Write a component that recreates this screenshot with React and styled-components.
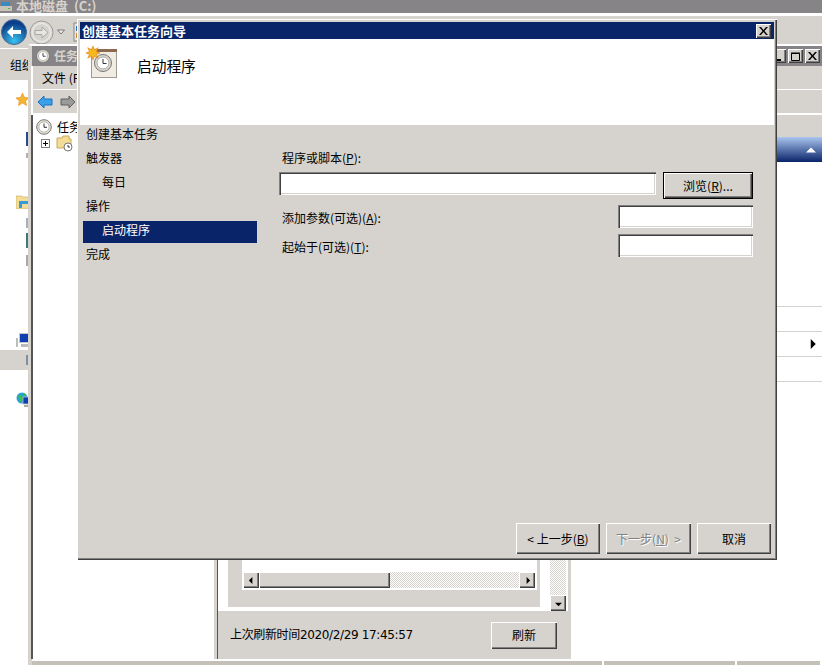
import React from "react";
import styled, { createGlobalStyle, css } from "styled-components";

const Global = createGlobalStyle`
  html, body { margin: 0; padding: 0; background: #fff; }
  * { box-sizing: border-box; }
`;

const FACE = "#d6d3ce";
const NAVY = "#0a246a";
const raised = css`
  box-shadow: inset 1px 1px 0 #fff, inset -1px -1px 0 #404040, inset -2px -2px 0 #808080;
`;
const dither = css`
  background: repeating-conic-gradient(${FACE} 0 25%, #fff 0 50%) 0 0 / 2px 2px;
`;

const Desktop = styled.div`
  position: relative;
  width: 822px;
  height: 665px;
  overflow: hidden;
  background: #fff;
  color: #000;
  font: 12px/18px "Noto Sans CJK SC", "Liberation Sans", sans-serif;
`;

/* ---------- Explorer window behind everything ---------- */
const Explorer = styled.div`
  position: absolute;
  inset: 0;
  display: flex;
  flex-direction: column;
`;
const ExplorerTitle = styled.div`
  height: 13px;
  flex: none;
  background: #868486;
  color: #d6d3ce;
  font-weight: 700;
  font-size: 13px;
  line-height: 11px;
  display: flex;
  gap: 4px;
  overflow: hidden;
  white-space: pre;
`;
const NavBar = styled.div`
  height: 33px;
  margin-top: 3px;
  flex: none;
  background: ${FACE};
  border-bottom: 1px solid #fff;
  display: flex;
  align-items: center;
  padding-left: 1px;
  gap: 2px;
`;
const OrganizeBar = styled.div`
  height: 31px;
  flex: none;
  background: ${FACE};
  display: flex;
  align-items: center;
  padding-left: 10px;
  white-space: nowrap;
  overflow: hidden;
`;
const NavPane = styled.div`
  width: 28px;
  flex: 1;
  display: flex;
  flex-direction: column;
  overflow: hidden;
`;
const NavItem = styled.div`
  margin-top: ${(p) => p.$top}px;
  height: ${(p) => p.$h}px;
  flex: none;
  display: flex;
  align-items: center;
  padding-left: 16px;
  ${(p) =>
    p.$selected &&
    css`
      background: ${FACE};
    `}
`;
const Sliver = styled.div`
  width: 2px;
  height: ${(p) => p.$h}px;
  margin-left: auto;
  background: ${(p) => p.$color};
`;

/* ---------- Task scheduler window ---------- */
const TaskWindow = styled.div`
  position: absolute;
  left: 28px;
  top: 44px;
  right: 0;
  height: 621px;
  display: flex;
  flex-direction: column;
  background: ${FACE};
  border-top: 2px solid #fff;
  border-left: 3px solid ${FACE};
  overflow: hidden;
`;
const TaskTitle = styled.div`
  height: 20px;
  flex: none;
  background: #868486;
  color: ${FACE};
  font-weight: 700;
  display: flex;
  align-items: center;
  padding-left: 4px;
  gap: 4px;
  border-left: 1px solid ${FACE};
`;
const WindowButtons = styled.div`
  margin-left: auto;
  display: flex;
  gap: 2px;
  padding-right: 2px;
`;
const WindowButton = styled.div`
  width: 15px;
  height: 14px;
  background: ${FACE};
  display: flex;
  align-items: center;
  justify-content: center;
  ${raised}
`;
const MenuBar = styled.div`
  height: 24px;
  flex: none;
  display: flex;
  align-items: center;
  padding-left: 9px;
  border-bottom: 1px solid #fff;
  border-left: 2px solid #fff;
  white-space: pre;
`;
const IconBar = styled.div`
  height: 25px;
  flex: none;
  display: flex;
  align-items: center;
  padding: 1px 0 0 4px;
  gap: 7px;
  border-bottom: 2px solid #fff;
  border-left: 2px solid #fff;
`;
const TaskBody = styled.div`
  flex: 1;
  min-height: 0;
  display: flex;
`;
const Tree = styled.div`
  width: 183px;
  flex: none;
  background: #fff;
  border-left: 2px solid #555;
  padding: 3px 0 0 3px;
  margin-right: 3px;
`;
const TreeRow = styled.div`
  display: flex;
  align-items: center;
  height: ${(p) => p.$h}px;
  gap: ${(p) => p.$gap}px;
  padding-left: ${(p) => p.$indent}px;
`;
const PlusBox = styled.div`
  width: 9px;
  height: 9px;
  border: 1px solid #808080;
  background:
    linear-gradient(#000, #000) center / 5px 1px no-repeat,
    linear-gradient(#000, #000) center / 1px 5px no-repeat;
`;
const CenterPane = styled.div`
  width: 354px;
  flex: none;
  display: flex;
  flex-direction: column;
  border-left: 1px solid #555;
  border-right: 3px solid ${FACE};
  box-shadow: 1px 0 0 #808080;
`;
const CenterScroll = styled.div`
  flex: 1;
  min-height: 0;
  display: flex;
  background: #fff;
  padding-right: 2px;
  justify-content: space-between;
`;
const CenterCard = styled.div`
  width: 312px;
  margin: 0 0 4px 10px;
  background: ${FACE};
  display: flex;
  flex-direction: column;
  justify-content: flex-end;
  padding: 0 3px 17px 14px;
`;
const ListBox = styled.div`
  background: #fff;
  border-bottom: 2px solid #fff;
  padding: 0 2px 0 1px;
  height: 100px;
  display: flex;
  flex-direction: column;
  justify-content: flex-end;
`;
const HScroll = styled.div`
  height: 16px;
  display: flex;
  ${dither}
`;
const ScrollButton = styled.div`
  width: 16px;
  height: 16px;
  flex: none;
  background: ${FACE};
  display: flex;
  align-items: center;
  justify-content: center;
  ${raised}
`;
const ScrollThumb = styled.div`
  width: 131px;
  background: ${FACE};
  ${raised}
`;
const Spacer = styled.div`
  flex: 1;
`;
const VScroll = styled.div`
  width: 16px;
  display: flex;
  flex-direction: column;
  justify-content: flex-end;
  ${dither}
`;
const RefreshRow = styled.div`
  height: 48px;
  flex: none;
  display: flex;
  align-items: center;
  justify-content: space-between;
  padding: 0 11px 0 12px;
`;
const Timestamp = styled.span`
  font-family: "DejaVu Sans", "Noto Sans CJK SC", sans-serif;
  font-size: 12px;
  letter-spacing: -0.35px;
`;
const ActionPane = styled.div`
  flex: 1;
  background: #fff;
  display: flex;
  flex-direction: column;
  padding-top: 22px;
  box-shadow: inset 0 22px 0 ${FACE};
`;
const ActionHeader = styled.div`
  height: 25px;
  flex: none;
  background: linear-gradient(#a9c5ee, #0a246a);
  display: flex;
  align-items: center;
  justify-content: flex-end;
  padding-right: 6px;
`;
const ActionList = styled.div`
  margin-top: 120px;
`;
const ActionRow = styled.div`
  height: 25px;
  border-bottom: 1px solid ${FACE};
  display: flex;
  align-items: center;
  justify-content: flex-end;
  padding-right: 5px;
`;
const StatusBar = styled.div`
  height: 6px;
  flex: none;
  display: flex;
  margin-left: 1px;
  border-top: 2px solid #fff;
  background: #c4c0b8;
`;
const StatusCell = styled.div`
  width: ${(p) => p.$w}px;
  flex: ${(p) => (p.$w ? "none" : 1)};
  border-right: 2px solid #fff;
`;

/* ---------- Wizard dialog ---------- */
const Dialog = styled.div`
  position: absolute;
  left: 77px;
  top: 19px;
  width: 700px;
  height: 541px;
  padding: 3px;
  background: ${FACE};
  display: flex;
  flex-direction: column;
  box-shadow: inset 1px 1px 0 #fff, inset -1px -1px 0 #404040, inset -2px -2px 0 #808080;
`;
const DialogTitle = styled.div`
  height: 17px;
  flex: none;
  background: ${NAVY};
  color: #fff;
  font-weight: 700;
  font-size: 13px;
  display: flex;
  align-items: center;
  justify-content: space-between;
  padding: 0 3px 0 2px;
`;
const WizardHeader = styled.div`
  height: 86px;
  flex: none;
  background: #fff;
  display: flex;
  align-items: flex-start;
  gap: 19px;
  padding: 7px 0 0 6px;
  font-size: 14.7px;
`;
const HeaderText = styled.div`
  margin-top: 11px;
`;
const WizardBody = styled.div`
  flex: 1;
  min-height: 0;
  display: flex;
`;
const Sidebar = styled.div`
  width: 174px;
  flex: none;
  margin-left: 3px;
  display: flex;
  flex-direction: column;
  gap: 6px;
`;
const Step = styled.div`
  height: ${(p) => (p.$active ? 22 : 18)}px;
  padding-left: ${(p) => (p.$sub ? 19 : 3)}px;
  ${(p) =>
    p.$active &&
    css`
      margin-bottom: -4px;
      background: ${NAVY};
      color: #fff;
    `}
`;
const Form = styled.div`
  width: 474px;
  margin-left: 22px;
  padding-top: 24px;
  display: flex;
  flex-direction: column;
`;
const Label = styled.label`
  padding-left: 3px;
  display: block;
  white-space: nowrap;
`;
const ProgramRow = styled.div`
  display: flex;
  gap: 7px;
  margin-top: 5px;
`;
const FieldRow = styled.div`
  display: flex;
  justify-content: space-between;
  margin-top: 6px;
  ${Label} { margin-top: 4px; }
`;
const TextInput = styled.input`
  width: ${(p) => (p.$wide ? "377px" : "135px")};
  height: 23px;
  padding: 0 3px;
  border: 0;
  outline: 0;
  background: #fff;
  box-shadow: inset 1px 1px 0 #808080, inset 2px 2px 0 #404040, inset -1px -1px 0 #fff, inset -2px -2px 0 ${FACE};
  flex: none;
`;
const Button = styled.button`
  width: ${(p) => p.$w}px;
  height: ${(p) => p.$h}px;
  flex: none;
  padding: 0;
  border: 0;
  background: ${FACE};
  color: #000;
  font: inherit;
  white-space: pre;
  ${raised}
  ${(p) =>
    p.$default &&
    css`
      border: 1px solid #000;
    `}
  ${(p) =>
    p.disabled &&
    css`
      color: #808080;
      text-shadow: 1px 1px 0 #fff;
    `}
`;
const Footer = styled.div`
  height: 34px;
  flex: none;
  display: flex;
  justify-content: flex-end;
  align-items: flex-start;
  gap: 6px;
  padding-right: 3px;
`;

/* ---------- Drawn icons ---------- */
const Svg = styled.svg`
  flex: none;
  display: block;
`;
const Clock = ({ size = 16 }) => (
  <Svg width={size} height={size} viewBox="0 0 16 16">
    <circle cx="8" cy="8" r="7.3" fill="#e8e4da" stroke="#777" />
    <circle cx="8" cy="8" r="5.2" fill="#fff" stroke="#b8b4ac" />
    <path d="M8 4.5V8.3H11" fill="none" stroke="#333" />
  </Svg>
);
const FolderClock = () => (
  <Svg width="17" height="17" viewBox="0 0 17 17">
    <path d="M1 3h5l1-2h6v3h2v9H1z" fill="#f3dc96" stroke="#c9a85a" />
    <circle cx="12" cy="12" r="4" fill="#fff" stroke="#777" />
    <path d="M12 10v2h2" fill="none" stroke="#333" />
  </Svg>
);
const BackOrb = () => (
  <Svg width="26" height="26" viewBox="0 0 26 26">
    <defs>
      <radialGradient id="orb" cx="50%" cy="85%" r="70%">
        <stop offset="0" stopColor="#39c2f0" />
        <stop offset="1" stopColor="#0b3f8c" />
      </radialGradient>
    </defs>
    <circle cx="13" cy="13" r="12.5" fill="url(#orb)" stroke="#4a6a8c" />
    <path d="M6 13l6-6v4h8v4h-8v4z" fill="#fff" />
  </Svg>
);
const ForwardOrb = () => (
  <Svg width="25" height="25" viewBox="0 0 25 25">
    <circle cx="12.5" cy="12.5" r="11.5" fill="#dcdad4" stroke="#9a9a9a" />
    <circle cx="12.5" cy="12.5" r="9" fill="#d6d3ce" stroke="#eee" />
    <path d="M19 12.5l-6-5.5v3.5H6v4h7V18z" fill="#e8e6e0" stroke="#a8a8a8" />
  </Svg>
);
const NavDrop = () => (
  <Svg width="8" height="6" viewBox="0 0 8 6" style={{ marginLeft: 1 }}>
    <path d="M.5 1h7L4 5z" fill="#eee" stroke="#777" />
  </Svg>
);
const AddressIcon = () => (
  <Svg width="12" height="20" viewBox="0 0 12 20" style={{ marginLeft: 6 }}>
    <rect x="1" y="1" width="11" height="18" fill="#e8e6de" stroke="#888" />
    <rect x="3" y="4" width="9" height="5" fill="#2a6fb0" />
    <rect x="3" y="11" width="9" height="5" fill="#c98a3a" />
  </Svg>
);
const Arrow = ({ dir, fill, stroke }) => (
  <Svg width="16" height="14" viewBox="0 0 16 14">
    <path
      d={dir === "left" ? "M1 7l6-6v3h8v6H7v3z" : "M15 7L9 1v3H1v6h8v3z"}
      fill={fill}
      stroke={stroke}
    />
  </Svg>
);
const Tri = ({ dir, color = "#000", size = 7 }) => {
  const d = {
    left: "M5 0v8L1 4z",
    right: "M3 0v8l4-4z",
    down: "M0 3h8L4 7z",
    up: "M0 6h8L4 2z",
  }[dir];
  return (
    <Svg width={size} height={size} viewBox="0 0 8 8">
      <path d={d} fill={color} />
    </Svg>
  );
};
const XGlyph = () => (
  <Svg width="9" height="8" viewBox="0 0 9 8">
    <path d="M0 0h2l2.5 3L7 0h2L5.5 4 9 8H7L4.5 5 2 8H0l3.5-4z" fill="#000" />
  </Svg>
);
const MaxGlyph = () => (
  <Svg width="9" height="9" viewBox="0 0 9 9">
    <path d="M.5 1.5h8v7h-8z M0 1h9" fill="none" stroke="#000" />
  </Svg>
);
const MinGlyph = () => (
  <Svg width="9" height="9" viewBox="0 0 9 9">
    <path d="M1 7h6v2H1z" fill="#000" />
  </Svg>
);
const WizardIcon = () => (
  <Svg width="32" height="33" viewBox="0 0 32 33">
    <rect x="5.5" y="3.5" width="25" height="28" fill="#f0ece4" stroke="#a09a90" />
    <rect x="5" y="3" width="26" height="3" fill="#8c6a50" />
    <circle cx="17" cy="17" r="8.5" fill="#dcd8ce" stroke="#777" />
    <circle cx="17" cy="17" r="6" fill="#fff" stroke="#aaa" />
    <path d="M17 13V17.5H20.5" fill="none" stroke="#333" />
    <path
      transform="scale(1.15)"
      d="M6 0l1.4 3.2L10.5 1.5 9 4.8l3.2 1.2L9 7.3l1.5 3.2-3.2-1.6L6 12 4.8 8.9 1.5 10.5 3 7.3 0 6l3-1.2L1.5 1.5l3.2 1.7z"
      fill="#f8b820"
      stroke="#e07a10"
      strokeWidth=".5"
    />
  </Svg>
);
const Star = () => (
  <Svg width="13" height="13" viewBox="0 0 13 13">
    <path d="M6.5 0l2 4.4 4.5.5-3.4 3 1 4.6-4.1-2.4-4.1 2.4 1-4.6L0 4.9l4.5-.5z" fill="#f6b52e" stroke="#e08a20" strokeWidth=".6" />
  </Svg>
);
const LibFolder = () => (
  <Svg width="13" height="14" viewBox="0 0 13 14">
    <path d="M0 1h6l1 1h6v12H0z" fill="#f3dc96" stroke="#c9a85a" strokeWidth=".6" />
    <rect x="3" y="6" width="10" height="3" fill="#3a9ad9" />
    <rect x="3" y="9" width="3" height="4" fill="#3a9ad9" />
  </Svg>
);
const Monitor = () => (
  <Svg width="12" height="15" viewBox="0 0 12 15">
    <rect x="3" y="0" width="9" height="10" fill="#c8c8c8" />
    <rect x="4" y="1" width="8" height="8" fill="#1040b0" />
    <rect x="0" y="5" width="2" height="9" fill="#b8c0b8" />
    <rect x="5" y="11" width="7" height="3" fill="#bbb" />
  </Svg>
);
const Globe = () => (
  <Svg width="13" height="16" viewBox="0 0 13 16">
    <circle cx="6" cy="6" r="5.5" fill="#2aa0d8" />
    <path d="M2 3l4 1 1 3-3 3zM8 1l2 2-2 1z" fill="#3ac040" />
    <rect x="7" y="5" width="6" height="7" fill="#1040b0" stroke="#bbb" strokeWidth=".8" />
    <rect x="8" y="13" width="5" height="2" fill="#aaa" />
  </Svg>
);
const DriveIcon = () => (
  <Svg width="12" height="12" viewBox="0 0 12 12">
    <rect x="0" y="6" width="12" height="5" fill="#c8c4b8" />
    <rect x="1" y="2" width="9" height="4" fill="#3a8ac0" />
    <rect x="8" y="8" width="2" height="1" fill="#30c030" />
  </Svg>
);

export default function App() {
  return (
    <Desktop>
      <Global />

      <Explorer>
        <ExplorerTitle>
          <DriveIcon />
          <span>本地磁盘  (C:)</span>
        </ExplorerTitle>
        <NavBar>
          <BackOrb />
          <ForwardOrb />
          <NavDrop />
          <AddressIcon />
        </NavBar>
        <OrganizeBar>组织</OrganizeBar>
        <NavPane>
          <NavItem $top={13} $h={13}><Star /></NavItem>
          <NavItem $top={26} $h={14}><Sliver $h={14} $color="#2a4a90" /></NavItem>
          <NavItem $top={7} $h={5}><Sliver $h={5} $color="#b0b0b0" /></NavItem>
          <NavItem $top={37} $h={14}><LibFolder /></NavItem>
          <NavItem $top={9} $h={10}><Sliver $h={10} $color="#a8b0c0" /></NavItem>
          <NavItem $top={5} $h={15}><Sliver $h={15} $color="#3a7a78" /></NavItem>
          <NavItem $top={7} $h={11}><Sliver $h={11} $color="#a8a8a8" /></NavItem>
          <NavItem $top={67} $h={15}><Monitor /></NavItem>
          <NavItem $top={2} $h={20} $selected><Sliver $h={10} $color="#8090a0" /></NavItem>
          <NavItem $top={22} $h={16}><Globe /></NavItem>
        </NavPane>
      </Explorer>

      <TaskWindow>
        <TaskTitle>
          <Clock size={14} />
          <span>任务计划程序</span>
          <WindowButtons>
            <WindowButton><MinGlyph /></WindowButton>
            <WindowButton><MaxGlyph /></WindowButton>
            <WindowButton><XGlyph /></WindowButton>
          </WindowButtons>
        </TaskTitle>
        <MenuBar>文件 (F)</MenuBar>
        <IconBar>
          <Arrow dir="left" fill="#3aa0e8" stroke="#1a70c0" />
          <Arrow dir="right" fill="#9a9a9a" stroke="#606060" />
        </IconBar>
        <TaskBody>
          <Tree>
            <TreeRow $h={17} $gap={5} $indent={0}>
              <Clock />
              <span>任务计划程序</span>
            </TreeRow>
            <TreeRow $h={17} $gap={6} $indent={5}>
              <PlusBox />
              <FolderClock />
            </TreeRow>
          </Tree>
          <CenterPane>
            <CenterScroll>
              <CenterCard>
                <ListBox>
                  <HScroll>
                    <ScrollButton><Tri dir="left" /></ScrollButton>
                    <ScrollThumb />
                    <Spacer />
                    <ScrollButton><Tri dir="right" /></ScrollButton>
                  </HScroll>
                </ListBox>
              </CenterCard>
              <VScroll>
                <ScrollButton><Tri dir="down" /></ScrollButton>
              </VScroll>
            </CenterScroll>
            <RefreshRow>
              <Timestamp>上次刷新时间2020/2/29 17:45:57</Timestamp>
              <Button $w={66} $h={27}>刷新</Button>
            </RefreshRow>
          </CenterPane>
          <ActionPane>
            <ActionHeader><Tri dir="up" color="#fff" size={10} /></ActionHeader>
            <ActionList>
              <ActionRow />
              <ActionRow />
              <ActionRow><Tri dir="right" size={10} /></ActionRow>
              <ActionRow />
            </ActionList>
          </ActionPane>
        </TaskBody>
        <StatusBar>
          <StatusCell $w={572} />
          <StatusCell $w={133} />
          <StatusCell />
        </StatusBar>
      </TaskWindow>

      <Dialog>
        <DialogTitle>
          <span>创建基本任务向导</span>
          <WindowButton><XGlyph /></WindowButton>
        </DialogTitle>
        <WizardHeader>
          <WizardIcon />
          <HeaderText>启动程序</HeaderText>
        </WizardHeader>
        <WizardBody>
          <Sidebar>
            <Step>创建基本任务</Step>
            <Step>触发器</Step>
            <Step $sub>每日</Step>
            <Step>操作</Step>
            <Step $sub $active>启动程序</Step>
            <Step>完成</Step>
          </Sidebar>
          <Form>
            <Label>程序或脚本(<u>P</u>):</Label>
            <ProgramRow>
              <TextInput $wide />
              <Button $w={90} $h={27} $default>浏览(<u>R</u>)...</Button>
            </ProgramRow>
            <FieldRow>
              <Label>添加参数(可选)(<u>A</u>):</Label>
              <TextInput />
            </FieldRow>
            <FieldRow>
              <Label>起始于(可选)(<u>T</u>):</Label>
              <TextInput />
            </FieldRow>
          </Form>
        </WizardBody>
        <Footer>
          <Button $w={84} $h={31}>&lt; 上一步(<u>B</u>)</Button>
          <Button $w={85} $h={31} disabled>下一步(<u>N</u>)  &gt;</Button>
          <Button $w={74} $h={31}>取消</Button>
        </Footer>
      </Dialog>
    </Desktop>
  );
}
